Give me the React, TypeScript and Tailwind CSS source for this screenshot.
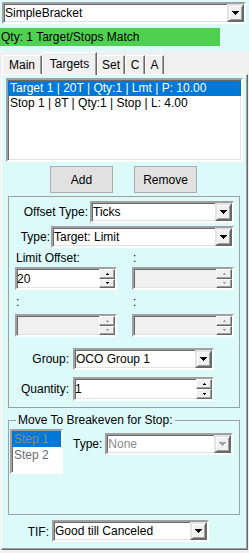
import React from "react";

const sunken =
  "border-2 border-t-[#a0a0a0] border-l-[#a0a0a0] border-r-white border-b-white shadow-[inset_1px_1px_0_#696969,inset_-1px_-1px_0_#e3e3e3]";
const raised =
  "bg-[#f0f0f0] border-2 border-t-[#e3e3e3] border-l-[#e3e3e3] border-r-[#696969] border-b-[#696969] shadow-[inset_1px_1px_0_#ffffff,inset_-1px_-1px_0_#a0a0a0]";

const Arrow = ({ color = "#000" }: { color?: string }) => (
  <svg width="7" height="4" viewBox="0 0 7 4" shapeRendering="crispEdges">
    <rect x="0" y="0" width="7" height="1" fill={color} />
    <rect x="1" y="1" width="5" height="1" fill={color} />
    <rect x="2" y="2" width="3" height="1" fill={color} />
    <rect x="3" y="3" width="1" height="1" fill={color} />
  </svg>
);

const TinyArrow = ({ up, color }: { up?: boolean; color: string }) => (
  <svg width="3" height="2" viewBox="0 0 3 2" shapeRendering="crispEdges">
    <rect x="0" y={up ? 1 : 0} width="3" height="1" fill={color} />
    <rect x="1" y={up ? 0 : 1} width="1" height="1" fill={color} />
  </svg>
);

interface ComboProps {
  text: string;
  className?: string;
  disabled?: boolean;
}

const Combo: React.FC<ComboProps> = ({ text, className = "", disabled }) => (
  <div className={`flex bg-white ${sunken} ${className}`}>
    <div
      className={`flex-1 flex items-center pl-[1px] whitespace-nowrap overflow-hidden ${
        disabled ? "text-[#8a8a8a]" : ""
      }`}
    >
      {text}
    </div>
    <div className={`w-[17px] shrink-0 flex items-center justify-center ${raised}`}>
      <Arrow color={disabled ? "#a0a0a0" : "#000"} />
    </div>
  </div>
);

const SpinBtn = ({ up, disabled }: { up?: boolean; disabled?: boolean }) => (
  <div className="flex-1 flex items-center justify-center bg-[#f0f0f0] border border-t-white border-l-white border-r-[#696969] border-b-[#696969] shadow-[inset_-1px_-1px_0_#a0a0a0]">
    <TinyArrow up={up} color={disabled ? "#a0a0a0" : "#000"} />
  </div>
);

interface SpinProps {
  value?: string;
  className?: string;
  disabled?: boolean;
}

const Spin: React.FC<SpinProps> = ({ value = "", className = "", disabled }) => (
  <div className={`flex ${sunken} ${disabled ? "bg-[#f0f0f0]" : "bg-white"} ${className}`}>
    <div className="flex-1 flex items-center">{value}</div>
    <div className="w-[16px] flex flex-col">
      <SpinBtn up disabled={disabled} />
      <SpinBtn disabled={disabled} />
    </div>
  </div>
);

const tabs = [
  { label: "Main", w: "w-[40px]" },
  { label: "Targets", w: "w-[55px]", active: true },
  { label: "Set", w: "w-[28px]" },
  { label: "C", w: "w-[20px]" },
  { label: "A", w: "w-[19px]" },
];

export default function App() {
  return (
    <div className="w-[249px] h-[553px] overflow-hidden bg-[#dcfafa] text-[12px] leading-[14px] text-black [font-family:'Liberation_Sans',Arial,sans-serif]">
      {/* Strategy selector */}
      <Combo text="SimpleBracket" className="ml-[2px] mt-[2px] w-[244px] h-[22px]" />

      {/* Status */}
      <div className="mt-[4px] w-[220px] h-[18px] bg-[#50d050] pl-[1px] leading-[18px]">
        Qty: 1 Target/Stops Match
      </div>

      {/* Tab control */}
      <div className="mt-[5px] h-[502px] bg-[#f0f0f0]">
        <div className="h-[23px] pl-[2px] flex items-end">
          {tabs.map((t) =>
            t.active ? (
              <div
                key={t.label}
                className={`${t.w} h-[23px] -mb-[1px] relative z-10 bg-[#f0f0f0] border-l border-t border-r border-l-white border-t-white border-r-[#696969] shadow-[inset_-1px_0_0_#a0a0a0] flex justify-center pt-[4px]`}
              >
                {t.label}
              </div>
            ) : (
              <div
                key={t.label}
                className={`${t.w} h-[19px] bg-[#f0f0f0] border-l border-t border-r border-l-white border-t-white border-r-[#696969] shadow-[inset_-1px_0_0_#a0a0a0] flex justify-center pt-[2px]`}
              >
                {t.label}
              </div>
            )
          )}
        </div>

        {/* Targets page */}
        <div className="ml-[1px] w-[247px] h-[476px] bg-[#dcfafa] border border-l-white border-t-white border-r-[#696969] border-b-[#696969] shadow-[inset_-1px_-1px_0_#a0a0a0] flex flex-col">
          {/* Target list */}
          <div className={`ml-[4px] mt-[3px] w-[237px] h-[84px] bg-white ${sunken}`}>
            <div className="pt-[1px]">
              <div className="h-[15px] leading-[15px] bg-[#0078d7] text-white px-[2px] whitespace-nowrap">
                Target 1 | 20T | Qty:1 | Lmt | P: 10.00
              </div>
              <div className="h-[15px] leading-[15px] px-[2px] whitespace-nowrap">
                Stop 1 | 8T | Qty:1 | Stop | L: 4.00
              </div>
            </div>
          </div>

          {/* Buttons */}
          <div className="mt-[4px] h-[27px] flex">
            <button className="ml-[48px] w-[63px] h-[27px] bg-[#e1e1e1] border border-[#adadad]">
              Add
            </button>
            <button className="ml-[21px] w-[63px] h-[27px] bg-[#e1e1e1] border border-[#adadad]">
              Remove
            </button>
          </div>

          {/* Target settings panel */}
          <div className="ml-[6px] mt-[3px] w-[232px] h-[212px] border border-[#a0a0a0] flex flex-col">
            <div className="mt-[4px] flex items-center">
              <span className="w-[79px] text-right">Offset Type:</span>
              <Combo text="Ticks" className="ml-[2px] w-[144px] h-[22px]" />
            </div>
            <div className="mt-[3px] flex items-center">
              <span className="w-[41px] text-right">Type:</span>
              <Combo text="Target: Limit" className="ml-[1px] w-[183px] h-[22px]" />
            </div>
            <div className="mt-[3px] h-[16px] flex items-start">
              <span className="ml-[7px] w-[117px]">Limit Offset:</span>
              <span>:</span>
            </div>
            <div className="h-[23px] flex">
              <Spin value="20" className="ml-[6px] w-[102px]" />
              <Spin disabled className="ml-[15px] w-[102px]" />
            </div>
            <div className="h-[24px] flex items-center">
              <span className="ml-[7px] w-[117px]">:</span>
              <span>:</span>
            </div>
            <div className="h-[23px] flex">
              <Spin disabled className="ml-[6px] w-[102px]" />
              <Spin disabled className="ml-[15px] w-[102px]" />
            </div>
            <div className="mt-[11px] flex items-center">
              <span className="w-[60px] text-right">Group:</span>
              <Combo text="OCO Group 1" className="ml-[4px] w-[141px] h-[22px]" />
            </div>
            <div className="mt-[7px] flex items-center">
              <span className="w-[60px] text-right">Quantity:</span>
              <Spin value="1" className="ml-[4px] w-[141px] h-[24px]" />
            </div>
          </div>

          {/* Breakeven */}
          <fieldset className="ml-[6px] mt-[5px] w-[232px] h-[102px] border border-[#a0a0a0] p-0">
            <legend className="ml-[7px] px-[2px] leading-[14px]">Move To Breakeven for Stop:</legend>
            <div className="flex items-start">
              <div className={`ml-[1px] mt-[2px] w-[53px] h-[45px] bg-white border-2 border-t-[#a0a0a0] border-l-[#a0a0a0] border-r-white border-b-white shadow-[inset_1px_1px_0_#696969]`}>
                <div className="h-[16px] leading-[16px] bg-[#0078d7] text-[#8c8c8c] pl-[2px]">Step 1</div>
                <div className="h-[16px] leading-[16px] text-[#6d6d6d] pl-[2px]">Step 2</div>
              </div>
              <div className="ml-[10px] mt-[6px] flex items-center">
                <span>Type:</span>
                <Combo text="None" disabled className="ml-[3px] w-[128px] h-[22px]" />
              </div>
            </div>
          </fieldset>

          {/* Time in force */}
          <div className="mt-[5px] flex items-end">
            <span className="w-[47px] text-right pb-[3px]">TIF:</span>
            <Combo text="Good till Canceled" className="ml-[3px] w-[157px] h-[22px]" />
          </div>
        </div>
      </div>
    </div>
  );
}
